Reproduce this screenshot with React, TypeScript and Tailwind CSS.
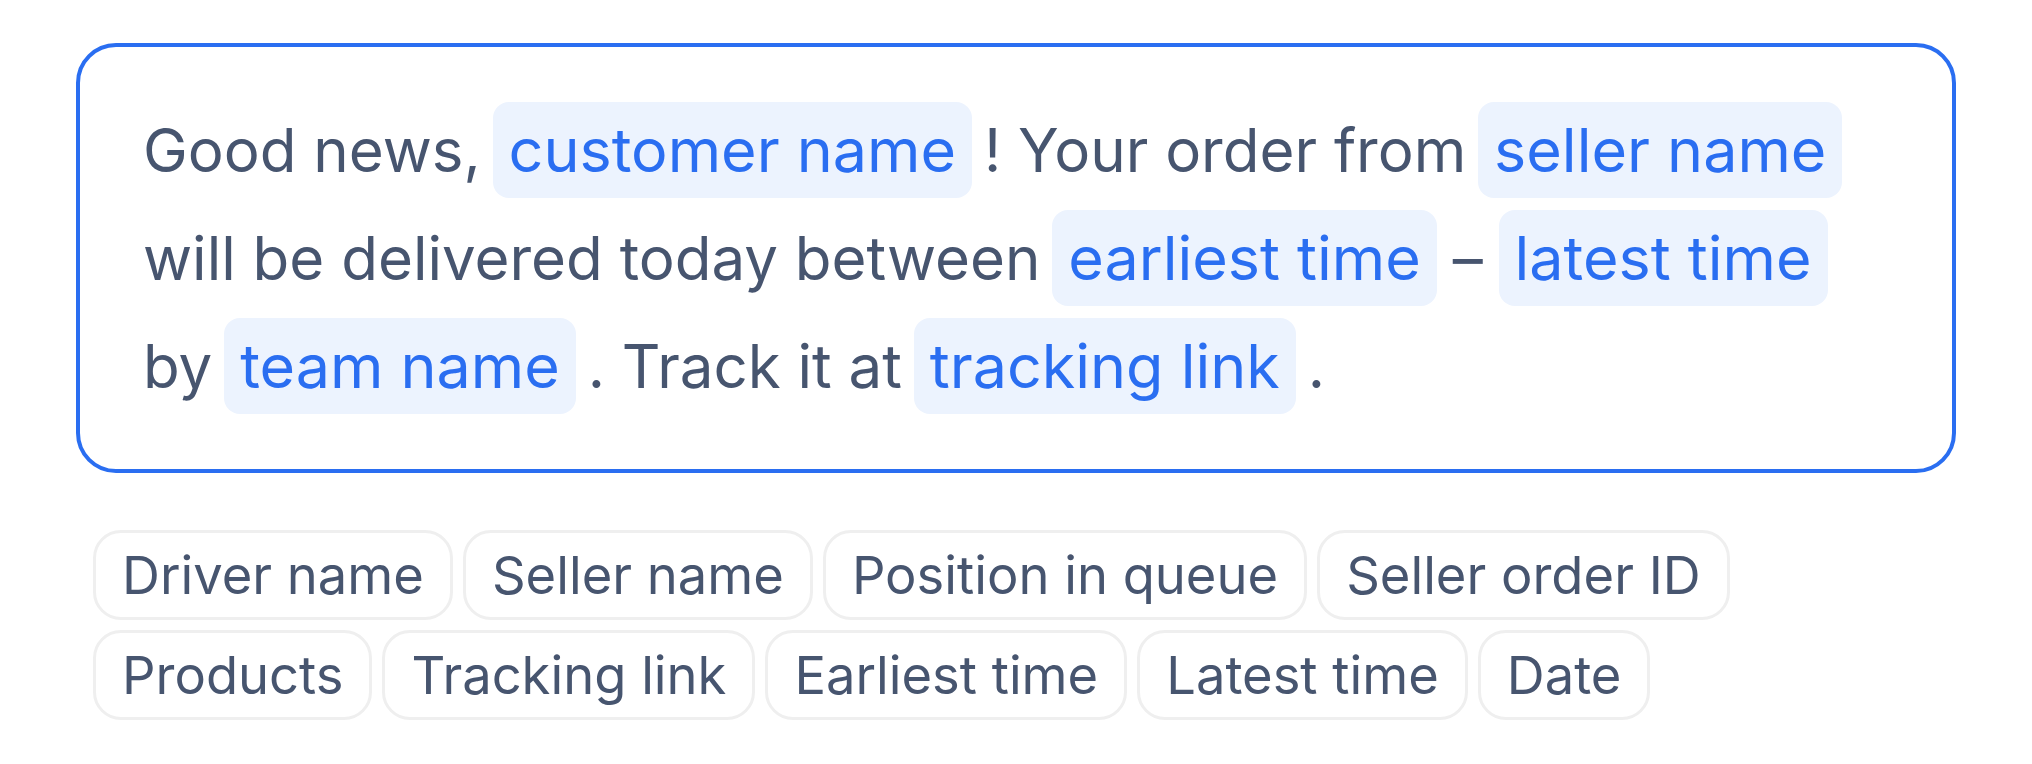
import type { ReactNode } from "react";

const tokens = [
  "Driver name",
  "Seller name",
  "Position in queue",
  "Seller order ID",
  "Products",
  "Tracking link",
  "Earliest time",
  "Latest time",
  "Date",
];

function Variable({ children }: { children: ReactNode }) {
  return (
    <span className="mx-[-5px] inline-block rounded-[16px] bg-[#ecf3fe] px-4 text-[61px] leading-[96px] text-[#2a6ef1]">
      {children}
    </span>
  );
}

export default function App() {
  return (
    <div
      className="min-h-screen bg-white px-[76px] pt-[43px]"
      style={{ fontFamily: "Inter, 'Noto Sans', sans-serif" }}
    >
      {/* Message template editor */}
      <div className="rounded-[40px] border-4 border-[#2a6ef1] px-[63px] py-[49px]">
        <p className="text-[60px] leading-[108px] text-[#47556f]">
          Good news, <Variable>customer name</Variable> ! Your order from{" "}
          <Variable>seller name</Variable> will be delivered today between{" "}
          <Variable>earliest time</Variable> <span className="mx-[4px]">–</span>{" "}
          <Variable>latest time</Variable> by <Variable>team name</Variable> .
          Track it at <Variable>tracking link</Variable> .
        </p>
      </div>

      {/* Insertable fields */}
      <div className="mt-[57px] flex flex-wrap gap-[10px] px-[17px]">
        {tokens.map((t) => (
          <button
            key={t}
            className="rounded-[28px] border-[3px] border-[#efefef] bg-white px-[26px] text-[52.5px] leading-[84px] text-[#47556f]"
          >
            {t}
          </button>
        ))}
      </div>
    </div>
  );
}
